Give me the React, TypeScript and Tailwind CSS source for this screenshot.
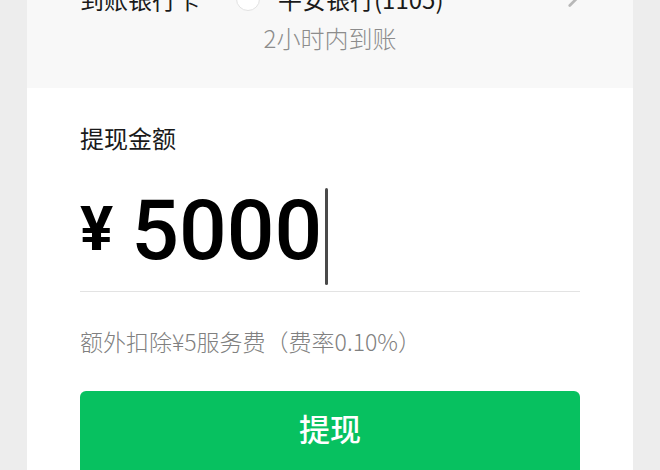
import { ChevronRight } from "lucide-react";

const cjk = "font-['Noto_Sans_CJK_SC','Noto_Sans',sans-serif]";

const WithdrawPage = () => {
  return (
    <div className={`h-[470px] w-[660px] overflow-hidden bg-[#ededed] px-[27px] ${cjk}`}>
      <div className="flex w-full flex-col bg-white">
        {/* bank card picker */}
        <div className="-mt-[24px] flex flex-col bg-[#f8f8f8] px-[53px] pb-[34px]">
          <div className="flex h-[46px] items-center text-[24px] text-[#1a1a1a]">
            <span>到账银行卡</span>
            <span className="ml-[36px] h-[24px] w-[24px] rounded-full border border-[#e2e2e2] bg-white" />
            <span className="ml-[18px]">平安银行(1105)</span>
            <ChevronRight className="ml-auto -mr-[6px] text-[#b8b8b8]" size={26} strokeWidth={2.5} />
          </div>
          <p className="text-center text-[24px] font-light leading-[32px] text-[#8c8c8c]">2小时内到账</p>
        </div>

        {/* amount form */}
        <div className="flex flex-col px-[53px] pt-[34px]">
          <p className="text-[24px] leading-[32px] text-[#1a1a1a]">提现金额</p>
          <div className="mt-[34px] flex h-[104px] items-start border-b border-[#e3e3e3]">
            <span className="mt-[10px] font-['Roboto',sans-serif] text-[62px] font-bold leading-none text-black">
              ¥
            </span>
            <span className="ml-[18px] mt-px font-['Roboto',sans-serif] text-[84px] font-medium leading-none text-black">
              5000
            </span>
            <span className="ml-[3px] h-[97px] w-[3px] rounded-full bg-[#4a4a4a]" />
          </div>
          <p className="mt-[33px] text-[23px] font-light leading-[32px] text-[#808080]">
            额外扣除¥5服务费（费率0.10%）
          </p>
          <button className="mt-[34px] flex h-[96px] w-full justify-center rounded-[6px] bg-[#07c160] pt-[17px]">
            <span className="text-[31px] font-medium leading-[40px] text-white">提现</span>
          </button>
        </div>
      </div>
    </div>
  );
};

export default function App() {
  return <WithdrawPage />;
}
